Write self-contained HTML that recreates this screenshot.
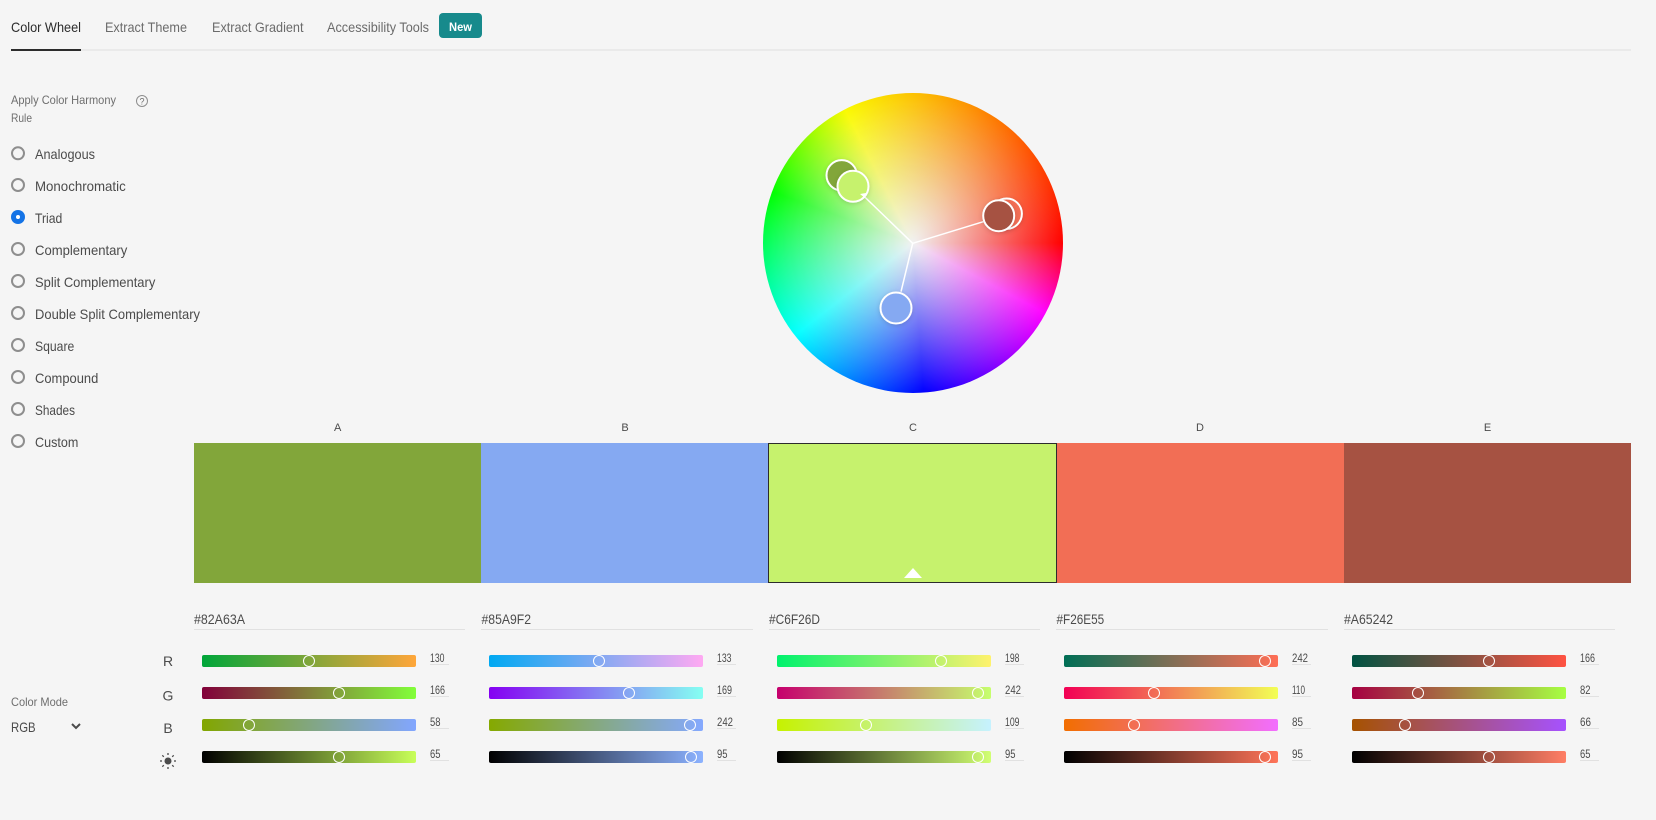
<!DOCTYPE html>
<html lang="en">
<head>
<meta charset="utf-8">
<title>Color Wheel</title>
<style>
html,body{margin:0;padding:0;width:1656px;height:820px;overflow:hidden;background:#f5f5f5}
body{position:relative;font-family:"Liberation Sans",sans-serif}
svg.o{position:absolute;left:0;top:0;width:1656px;height:820px;overflow:visible}
.wheel{position:absolute;left:763px;top:93px;width:300px;height:300px;border-radius:50%;background:radial-gradient(closest-side,rgba(0,0,0,.055) 0,rgba(0,0,0,.035) 50%,rgba(0,0,0,0) 95%),radial-gradient(closest-side,#fff 0,rgba(255,255,255,0) 100%),conic-gradient(from 0deg,rgb(252,194,0) 0deg,#f00 90deg,#f0f 118deg,#00f 176deg,#0ff 232deg,#0f0 290deg,#fafa00 333deg,rgb(252,194,0) 360deg)}
.sw{position:absolute;top:443px;height:140px}
.s{position:absolute;width:214px;height:12px;border-radius:2px}
.h{position:absolute;width:12px;height:12px;box-sizing:border-box;border:1.5px solid #fff;border-radius:50%}
text{font-family:"Liberation Sans",sans-serif}
.tab{font-size:14px;fill:#6b6b6b}
.lb{font-size:14px;fill:#4b4b4b}
.sm{font-size:12px;fill:#6e6e6e}
.hex{font-size:14px;fill:#4b4b4b}
.v{font-size:12px;fill:#4b4b4b}
.ch{font-size:11px;fill:#4b4b4b;text-anchor:middle}
.rgb{font-size:14px;fill:#4b4b4b;text-anchor:middle}
.r{fill:none;stroke:#8e8e8e;stroke-width:2}
.m{stroke:#fff;stroke-width:2;filter:drop-shadow(0 1px 2px rgba(0,0,0,.14))}
</style>
</head>
<body>
<div class="wheel"></div>

<div class="sw" style="left:194px;width:287px;background:#82a63a"></div>
<div class="sw" style="left:481px;width:287px;background:#85a9f2"></div>
<div class="sw" style="left:1057px;width:287px;background:#f26e55"></div>
<div class="sw" style="left:1344px;width:287px;background:#a65242"></div>
<div class="sw" style="left:768px;width:289px;box-sizing:border-box;background:#c6f26d;border:1.5px solid #2c2c2c"></div>

<!-- Column A -->
<div class="s" style="left:202px;top:655px;background:linear-gradient(90deg,rgb(0,166,58),rgb(255,166,58))"></div>
<div class="s" style="left:202px;top:687px;background:linear-gradient(90deg,rgb(130,0,58),rgb(130,255,58))"></div>
<div class="s" style="left:202px;top:719px;background:linear-gradient(90deg,rgb(130,166,0),rgb(130,166,255))"></div>
<div class="s" style="left:202px;top:751px;background:linear-gradient(90deg,#000,rgb(200,255,89))"></div>
<div class="h" style="left:303px;top:655px"></div>
<div class="h" style="left:333px;top:687px"></div>
<div class="h" style="left:243px;top:719px"></div>
<div class="h" style="left:333px;top:751px"></div>

<!-- Column B -->
<div class="s" style="left:489px;top:655px;background:linear-gradient(90deg,rgb(0,169,242),rgb(255,169,242))"></div>
<div class="s" style="left:489px;top:687px;background:linear-gradient(90deg,rgb(133,0,242),rgb(133,255,242))"></div>
<div class="s" style="left:489px;top:719px;background:linear-gradient(90deg,rgb(133,169,0),rgb(133,169,255))"></div>
<div class="s" style="left:489px;top:751px;background:linear-gradient(90deg,#000,rgb(140,178,255))"></div>
<div class="h" style="left:593px;top:655px"></div>
<div class="h" style="left:623px;top:687px"></div>
<div class="h" style="left:684px;top:719px"></div>
<div class="h" style="left:685px;top:751px"></div>

<!-- Column C -->
<div class="s" style="left:777px;top:655px;background:linear-gradient(90deg,rgb(0,242,109),rgb(255,242,109))"></div>
<div class="s" style="left:777px;top:687px;background:linear-gradient(90deg,rgb(198,0,109),rgb(198,255,109))"></div>
<div class="s" style="left:777px;top:719px;background:linear-gradient(90deg,rgb(198,242,0),rgb(198,242,255))"></div>
<div class="s" style="left:777px;top:751px;background:linear-gradient(90deg,#000,rgb(209,255,115))"></div>
<div class="h" style="left:935px;top:655px"></div>
<div class="h" style="left:972px;top:687px"></div>
<div class="h" style="left:860px;top:719px"></div>
<div class="h" style="left:972px;top:751px"></div>

<!-- Column D -->
<div class="s" style="left:1064px;top:655px;background:linear-gradient(90deg,rgb(0,110,85),rgb(255,110,85))"></div>
<div class="s" style="left:1064px;top:687px;background:linear-gradient(90deg,rgb(242,0,85),rgb(242,255,85))"></div>
<div class="s" style="left:1064px;top:719px;background:linear-gradient(90deg,rgb(242,110,0),rgb(242,110,255))"></div>
<div class="s" style="left:1064px;top:751px;background:linear-gradient(90deg,#000,rgb(255,116,89))"></div>
<div class="h" style="left:1259px;top:655px"></div>
<div class="h" style="left:1148px;top:687px"></div>
<div class="h" style="left:1128px;top:719px"></div>
<div class="h" style="left:1259px;top:751px"></div>

<!-- Column E -->
<div class="s" style="left:1352px;top:655px;background:linear-gradient(90deg,rgb(0,82,66),rgb(255,82,66))"></div>
<div class="s" style="left:1352px;top:687px;background:linear-gradient(90deg,rgb(166,0,66),rgb(166,255,66))"></div>
<div class="s" style="left:1352px;top:719px;background:linear-gradient(90deg,rgb(166,82,0),rgb(166,82,255))"></div>
<div class="s" style="left:1352px;top:751px;background:linear-gradient(90deg,#000,rgb(255,126,101))"></div>
<div class="h" style="left:1483px;top:655px"></div>
<div class="h" style="left:1412px;top:687px"></div>
<div class="h" style="left:1399px;top:719px"></div>
<div class="h" style="left:1483px;top:751px"></div>

<svg class="o" viewBox="0 0 1656 820" xmlns="http://www.w3.org/2000/svg">
  <!-- Tabs -->
  <rect x="11" y="49" width="1620" height="2" fill="#eaeaea"/>
  <rect x="11" y="49" width="70" height="2" fill="#2c2c2c"/>
  <text x="11" y="32" class="tab" style="fill:#2c2c2c" textLength="70" lengthAdjust="spacingAndGlyphs">Color Wheel</text>
  <text x="105" y="32" class="tab" textLength="82" lengthAdjust="spacingAndGlyphs">Extract Theme</text>
  <text x="212" y="32" class="tab" textLength="91.5" lengthAdjust="spacingAndGlyphs">Extract Gradient</text>
  <text x="327" y="32" class="tab" textLength="102" lengthAdjust="spacingAndGlyphs">Accessibility Tools</text>
  <rect x="439" y="13" width="43" height="25" rx="4" fill="#178a8c"/>
  <text x="449" y="31" font-size="12" font-weight="bold" fill="#fff" textLength="23" lengthAdjust="spacingAndGlyphs">New</text>

  <!-- Harmony rule -->
  <text x="11" y="104" class="sm" textLength="105" lengthAdjust="spacingAndGlyphs">Apply Color Harmony</text>
  <text x="11" y="122" class="sm" textLength="21" lengthAdjust="spacingAndGlyphs">Rule</text>
  <circle cx="142" cy="101" r="5.5" fill="none" stroke="#8e8e8e" stroke-width="1"/>
  <text x="142" y="104.5" font-size="9" fill="#6e6e6e" text-anchor="middle">?</text>

  <circle class="r" cx="18" cy="153.3" r="6"/>
  <circle class="r" cx="18" cy="185" r="6"/>
  <circle cx="18" cy="217" r="7" fill="#1473e6"/><circle cx="18" cy="217" r="2" fill="#fff"/>
  <circle class="r" cx="18" cy="249" r="6"/>
  <circle class="r" cx="18" cy="281" r="6"/>
  <circle class="r" cx="18" cy="313" r="6"/>
  <circle class="r" cx="18" cy="345" r="6"/>
  <circle class="r" cx="18" cy="377" r="6"/>
  <circle class="r" cx="18" cy="409" r="6"/>
  <circle class="r" cx="18" cy="441" r="6"/>

  <text x="35" y="159" class="lb" textLength="60" lengthAdjust="spacingAndGlyphs">Analogous</text>
  <text x="35" y="191" class="lb" textLength="90.7" lengthAdjust="spacingAndGlyphs">Monochromatic</text>
  <text x="35" y="223" class="lb" textLength="27.3" lengthAdjust="spacingAndGlyphs">Triad</text>
  <text x="35" y="255" class="lb" textLength="92.3" lengthAdjust="spacingAndGlyphs">Complementary</text>
  <text x="35" y="287" class="lb" textLength="120.3" lengthAdjust="spacingAndGlyphs">Split Complementary</text>
  <text x="35" y="319" class="lb" textLength="165" lengthAdjust="spacingAndGlyphs">Double Split Complementary</text>
  <text x="35" y="351" class="lb" textLength="39.3" lengthAdjust="spacingAndGlyphs">Square</text>
  <text x="35" y="383" class="lb" textLength="63.3" lengthAdjust="spacingAndGlyphs">Compound</text>
  <text x="35" y="415" class="lb" textLength="40" lengthAdjust="spacingAndGlyphs">Shades</text>
  <text x="35" y="447" class="lb" textLength="43.3" lengthAdjust="spacingAndGlyphs">Custom</text>

  <!-- Wheel markers -->
  <g stroke="#fff" stroke-width="1.5" fill="none">
    <line x1="912.7" y1="243.3" x2="862.7" y2="195"/>
    <line x1="912.7" y1="243.3" x2="983.3" y2="221.7"/>
    <line x1="912.7" y1="243.3" x2="901" y2="291.7"/>
  </g>
  <circle class="m" cx="841.7" cy="175.3" r="15.2" fill="#82a63a"/>
  <circle class="m" cx="1006.7" cy="213.7" r="15.2" fill="#f26e55"/>
  <circle class="m" cx="998.7" cy="215.7" r="15.5" fill="#a65242"/>
  <circle class="m" cx="896" cy="308" r="15.5" fill="#85a9f2"/>
  <circle class="m" cx="853" cy="186.3" r="15.5" fill="#c6f26d"/>
  <path d="M860 194 L866 193 L865 198 Z" fill="#fff"/>

  <!-- Swatch labels -->
  <text x="337.7" y="431" class="ch">A</text>
  <text x="625" y="431" class="ch">B</text>
  <text x="913" y="431" class="ch">C</text>
  <text x="1200" y="431" class="ch">D</text>
  <text x="1487.5" y="431" class="ch">E</text>
  <path d="M904 578 L913 568 L922 578 Z" fill="#fff"/>

  <!-- Hex -->
  <text x="194" y="624" class="hex" textLength="51" lengthAdjust="spacingAndGlyphs">#82A63A</text>
  <text x="481.5" y="624" class="hex" textLength="49.5" lengthAdjust="spacingAndGlyphs">#85A9F2</text>
  <text x="769" y="624" class="hex" textLength="51" lengthAdjust="spacingAndGlyphs">#C6F26D</text>
  <text x="1056.5" y="624" class="hex" textLength="47.7" lengthAdjust="spacingAndGlyphs">#F26E55</text>
  <text x="1344" y="624" class="hex" textLength="49" lengthAdjust="spacingAndGlyphs">#A65242</text>
  <g fill="#e1e1e1">
    <rect x="194" y="629" width="271" height="1"/>
    <rect x="481" y="629" width="272" height="1"/>
    <rect x="769" y="629" width="271" height="1"/>
    <rect x="1056" y="629" width="272" height="1"/>
    <rect x="1344" y="629" width="271" height="1"/>
    <rect x="430" y="664" width="19" height="1"/><rect x="430" y="696" width="19" height="1"/><rect x="430" y="728" width="19" height="1"/><rect x="430" y="760" width="19" height="1"/>
    <rect x="717" y="664" width="19" height="1"/><rect x="717" y="696" width="19" height="1"/><rect x="717" y="728" width="19" height="1"/><rect x="717" y="760" width="19" height="1"/>
    <rect x="1005" y="664" width="19" height="1"/><rect x="1005" y="696" width="19" height="1"/><rect x="1005" y="728" width="19" height="1"/><rect x="1005" y="760" width="19" height="1"/>
    <rect x="1292" y="664" width="19" height="1"/><rect x="1292" y="696" width="19" height="1"/><rect x="1292" y="728" width="19" height="1"/><rect x="1292" y="760" width="19" height="1"/>
    <rect x="1580" y="664" width="19" height="1"/><rect x="1580" y="696" width="19" height="1"/><rect x="1580" y="728" width="19" height="1"/><rect x="1580" y="760" width="19" height="1"/>
  </g>

  <!-- Values -->
  <text x="430" y="662" class="v" textLength="14.5" lengthAdjust="spacingAndGlyphs">130</text>
  <text x="430" y="694" class="v" textLength="15" lengthAdjust="spacingAndGlyphs">166</text>
  <text x="430" y="726" class="v" textLength="10.5" lengthAdjust="spacingAndGlyphs">58</text>
  <text x="430" y="758" class="v" textLength="10.5" lengthAdjust="spacingAndGlyphs">65</text>

  <text x="717" y="662" class="v" textLength="14.5" lengthAdjust="spacingAndGlyphs">133</text>
  <text x="717" y="694" class="v" textLength="15" lengthAdjust="spacingAndGlyphs">169</text>
  <text x="717" y="726" class="v" textLength="16" lengthAdjust="spacingAndGlyphs">242</text>
  <text x="717" y="758" class="v" textLength="10.5" lengthAdjust="spacingAndGlyphs">95</text>

  <text x="1005" y="662" class="v" textLength="14.5" lengthAdjust="spacingAndGlyphs">198</text>
  <text x="1005" y="694" class="v" textLength="16" lengthAdjust="spacingAndGlyphs">242</text>
  <text x="1005" y="726" class="v" textLength="14.5" lengthAdjust="spacingAndGlyphs">109</text>
  <text x="1005" y="758" class="v" textLength="10.5" lengthAdjust="spacingAndGlyphs">95</text>

  <text x="1292" y="662" class="v" textLength="16" lengthAdjust="spacingAndGlyphs">242</text>
  <text x="1292" y="694" class="v" textLength="13" lengthAdjust="spacingAndGlyphs">110</text>
  <text x="1292" y="726" class="v" textLength="11" lengthAdjust="spacingAndGlyphs">85</text>
  <text x="1292" y="758" class="v" textLength="11" lengthAdjust="spacingAndGlyphs">95</text>

  <text x="1580" y="662" class="v" textLength="15" lengthAdjust="spacingAndGlyphs">166</text>
  <text x="1580" y="694" class="v" textLength="10.5" lengthAdjust="spacingAndGlyphs">82</text>
  <text x="1580" y="726" class="v" textLength="11" lengthAdjust="spacingAndGlyphs">66</text>
  <text x="1580" y="758" class="v" textLength="10.5" lengthAdjust="spacingAndGlyphs">65</text>

  <!-- Channel labels -->
  <text x="168" y="666" class="rgb">R</text>
  <text x="168" y="700.5" class="rgb">G</text>
  <text x="168" y="733" class="rgb">B</text>
  <circle cx="168" cy="761" r="3.5" fill="#4b4b4b"/>
  <g stroke="#4b4b4b" stroke-width="1.3" stroke-linecap="butt">
    <line x1="168" y1="753" x2="168" y2="755"/>
    <line x1="168" y1="767" x2="168" y2="769"/>
    <line x1="160" y1="761" x2="162" y2="761"/>
    <line x1="174" y1="761" x2="176" y2="761"/>
    <line x1="162.3" y1="755.3" x2="163.8" y2="756.8"/>
    <line x1="172.2" y1="765.2" x2="173.7" y2="766.7"/>
    <line x1="162.3" y1="766.7" x2="163.8" y2="765.2"/>
    <line x1="172.2" y1="756.8" x2="173.7" y2="755.3"/>
  </g>

  <!-- Color mode -->
  <text x="11" y="706" class="sm" textLength="57" lengthAdjust="spacingAndGlyphs">Color Mode</text>
  <text x="11" y="732" font-size="14" fill="#4b4b4b" textLength="24.6" lengthAdjust="spacingAndGlyphs">RGB</text>
  <path d="M72 724 L76 728 L80 724" fill="none" stroke="#4b4b4b" stroke-width="2"/>
</svg>
</body>
</html>
